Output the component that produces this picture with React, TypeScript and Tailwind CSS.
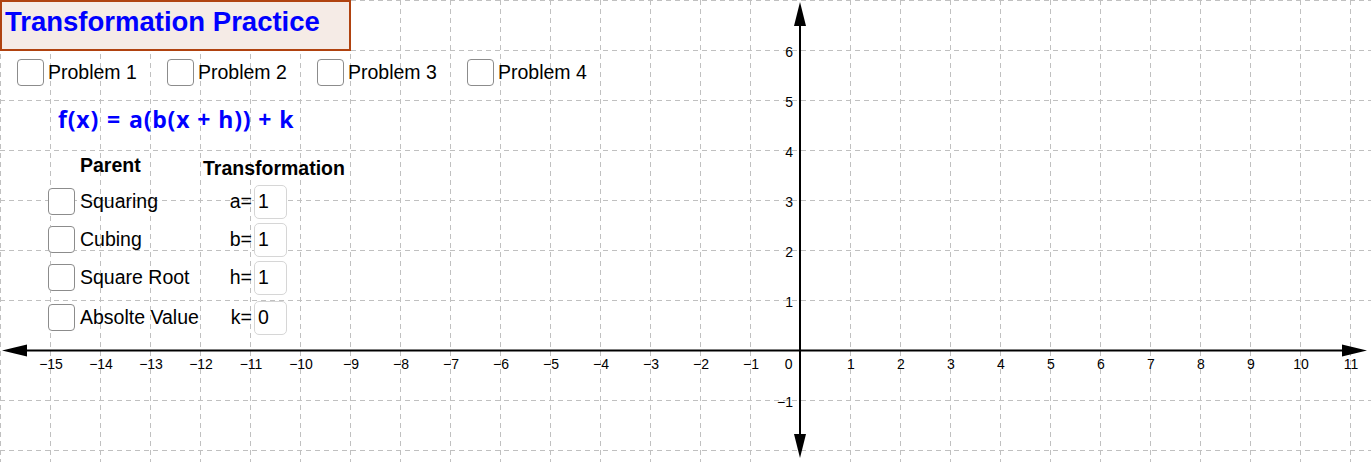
import React from 'react'

const ORIGIN_X = 800
const ORIGIN_Y = 350.5
const UNIT = 50

const xTicks = Array.from({ length: 27 }, (_, i) => i - 15).filter((n) => n !== 0)
const yTicks = [6, 5, 4, 3, 2, 1, -1]

const num = (n: number) => (n < 0 ? `\u2212${Math.abs(n)}` : `${n}`)

function Graph() {
  const vLines = Array.from({ length: 28 }, (_, i) => i * UNIT)
  const hLines = Array.from({ length: 10 }, (_, i) => i * UNIT + 0.5)
  return (
    <svg width="1371" height="462" viewBox="0 0 1371 462" className="block">
      <rect width="1371" height="462" fill="#ffffff" />
      <g stroke="#c0c0c0" strokeWidth="1" strokeDasharray="5 4">
        {vLines
          .filter((x) => x !== ORIGIN_X)
          .map((x) => (
            <line key={`v${x}`} x1={x + 0.5} y1={0} x2={x + 0.5} y2={462} />
          ))}
        {hLines
          .filter((y) => y !== ORIGIN_Y)
          .map((y) => (
            <line key={`h${y}`} x1={0} y1={y} x2={1371} y2={y} />
          ))}
      </g>
      <g stroke="#000" strokeWidth="2">
        <line x1={20} y1={ORIGIN_Y} x2={1350} y2={ORIGIN_Y} />
        <line x1={ORIGIN_X} y1={20} x2={ORIGIN_X} y2={440} />
      </g>
      <g fill="#000">
        <polygon points={`2,${ORIGIN_Y} 27,${ORIGIN_Y - 6} 27,${ORIGIN_Y + 6}`} />
        <polygon points={`1367,${ORIGIN_Y} 1342,${ORIGIN_Y - 6} 1342,${ORIGIN_Y + 6}`} />
        <polygon points={`${ORIGIN_X},2 ${ORIGIN_X - 6},26 ${ORIGIN_X + 6},26`} />
        <polygon points={`${ORIGIN_X},458 ${ORIGIN_X - 6},434 ${ORIGIN_X + 6},434`} />
      </g>
      <g
        fill="#000"
        fontSize="14"
        style={{ fontFamily: '"Liberation Sans", Arial, sans-serif' }}
      >
        {xTicks.map((n) => (
          <text key={`x${n}`} x={ORIGIN_X + n * UNIT + 1} y={369} textAnchor="middle">
            {num(n)}
          </text>
        ))}
        <text x={792.5} y={369} textAnchor="end">
          0
        </text>
        {yTicks.map((n) => (
          <text key={`y${n}`} x={793} y={ORIGIN_Y - n * UNIT + 6.5} textAnchor="end">
            {num(n)}
          </text>
        ))}
      </g>
    </svg>
  )
}

function Box() {
  return (
    <span className="w-[27px] h-[27px] shrink-0 rounded-[4px] border-[1.5px] border-[#8c8c8c] bg-white" />
  )
}

function Problem({ label }: { label: string }) {
  return (
    <div className="w-[150px] flex items-center gap-[4px]">
      <Box />
      <span>{label}</span>
    </div>
  )
}

function Field({ name, value }: { name: string; value: string }) {
  return (
    <div className="flex items-center">
      <span className="w-[46px] text-right">{name}</span>
      <span className="ml-[2px] w-[33px] h-[34px] rounded-[5px] border border-[#d6d6d6] bg-white pl-[3px] flex items-center">
        {value}
      </span>
    </div>
  )
}

function Row({ label, name, value, className }: { label: string; name: string; value: string; className?: string }) {
  return (
    <div className={`flex items-center h-[38px] ${className ?? ''}`}>
      <div className="w-[158px] flex items-center gap-[5px]">
        <Box />
        <span>{label}</span>
      </div>
      <Field name={name} value={value} />
    </div>
  )
}

export default function App() {
  return (
    <div
      className="relative w-[1371px] h-[462px] overflow-hidden bg-white text-black"
      style={{ fontFamily: '"Liberation Sans", Arial, sans-serif' }}
    >
      <Graph />
      <div className="absolute left-0 top-0 flex flex-col text-[19.5px] leading-none">
        <div className="w-[351px] h-[51px] border-2 border-[#b0420f] bg-[#f5ebe6] flex items-center pl-[3px] pb-[7px]">
          <span className="text-[27.5px] font-bold text-[#0000ff]">Transformation Practice</span>
        </div>
        <div className="flex pl-[17px] mt-[8px]">
          <Problem label="Problem 1" />
          <Problem label="Problem 2" />
          <Problem label="Problem 3" />
          <Problem label="Problem 4" />
        </div>
        <div
          className="ml-[58px] mt-[22px] text-[23px] font-bold text-[#0000ff] flex items-center tracking-[0.8px]"
          style={{ fontFamily: '"Open Sans", "Noto Sans", sans-serif' }}
        >
          <span>f(x)</span>
          <span className="mx-[8px]">=</span>
          <span>a(b(x</span>
          <span className="mx-[7px]">+</span>
          <span>h))</span>
          <span className="mx-[7px]">+</span>
          <span>k</span>
        </div>
        <div className="flex font-bold mt-[25px]">
          <span className="ml-[80px] w-[123px]">Parent</span>
          <span className="mt-[3px]">Transformation</span>
        </div>
        <div className="flex flex-col ml-[48px] mt-[4px]">
          <Row label="Squaring" name="a=" value="1" />
          <Row label="Cubing" name="b=" value="1" />
          <Row label="Square Root" name="h=" value="1" />
          <Row label="Absolte Value" name="k=" value="0" className="mt-[2px]" />
        </div>
      </div>
    </div>
  )
}
